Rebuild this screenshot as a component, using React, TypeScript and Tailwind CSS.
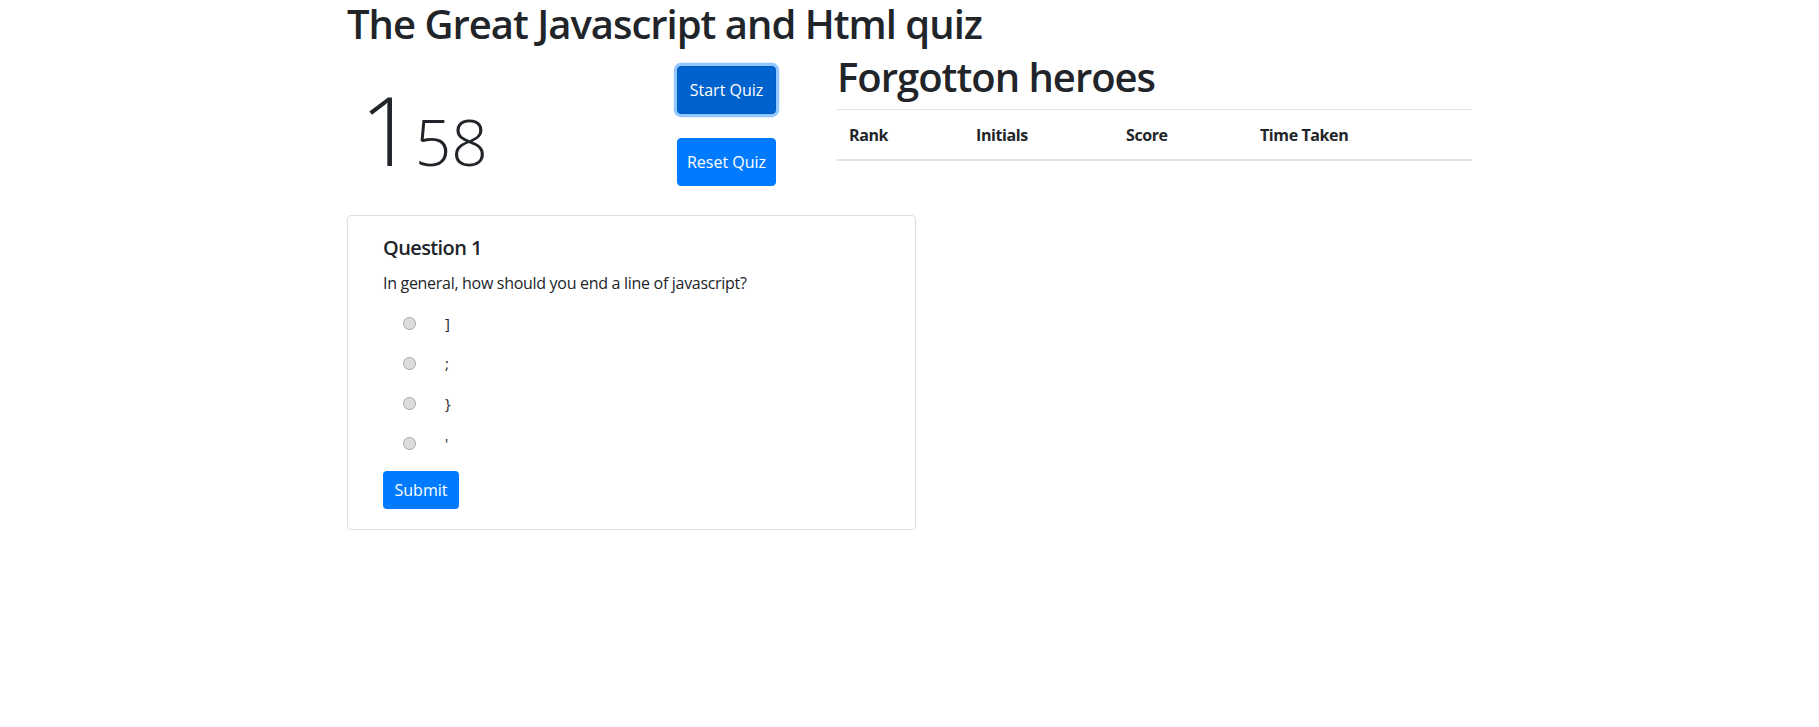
const options = ["]", ";", "}", "'"]

function Radio() {
  return (
    <span className="block h-[13px] w-[13px] rounded-full border border-[#a6a6a6] bg-[#dddddd]" />
  )
}

export default function App() {
  return (
    <div className="min-h-screen bg-white text-[#212529] [font-family:'Open_Sans','Noto_Sans',sans-serif]">
      <div className="mx-auto w-[1125px]">
        <h1 className="mb-2 text-[40px] leading-[48px] font-semibold tracking-[-1px]">
          The Great Javascript and Html quiz
        </h1>

        <div className="flex">
          <div className="flex w-[490px]">
            <div className="flex w-[330px] items-baseline pl-[13px] pt-[25px] font-light">
              <span className="text-[96px] leading-[96px]">1</span>
              <span className="text-[64px] leading-none">58</span>
            </div>
            <div className="flex flex-col gap-6 pt-[10px]">
              <button className="h-[48px] w-[99px] rounded-[4px] border border-[#005cbf] bg-[#0062cc] text-base text-white shadow-[0_0_0_3.2px_rgba(38,143,255,0.5)]">
                Start Quiz
              </button>
              <button className="h-[48px] w-[99px] rounded-[4px] border border-[#007bff] bg-[#007bff] text-base text-white">
                Reset Quiz
              </button>
            </div>
          </div>

          <div className="w-[635px]">
            <h2 className="mb-[11px] text-[40px] leading-[42px] font-semibold tracking-[-1px]">Forgotton heroes</h2>
            <table className="w-full border-collapse text-left text-base">
              <thead>
                <tr className="border-t border-b-2 border-t-[#dee2e6] border-b-[#dee2e6]">
                  <th className="w-[127px] px-3 pt-[13px] pb-3 leading-6 font-bold tracking-[-0.4px]">Rank</th>
                  <th className="w-[150px] px-3 pt-[13px] pb-3 leading-6 font-bold tracking-[-0.4px]">Initials</th>
                  <th className="w-[134px] px-3 pt-[13px] pb-3 leading-6 font-bold tracking-[-0.4px]">Score</th>
                  <th className="px-3 pt-[13px] pb-3 leading-6 font-bold tracking-[-0.4px]">Time Taken</th>
                </tr>
              </thead>
              <tbody />
            </table>
          </div>
        </div>

        <div className="mt-[29px] w-[569px] rounded-[4px] border border-[rgba(0,0,0,0.125)] px-[35px] pt-5 pb-5">
          <h5 className="text-[20px] leading-6 font-semibold tracking-[-0.6px]">Question 1</h5>
          <p className="mt-[11px] text-base leading-6 tracking-[-0.3px]">
            In general, how should you end a line of javascript?
          </p>
          <div className="mt-2">
            {options.map((o) => (
              <label key={o} className="flex h-10 items-center pl-[20px]">
                <Radio />
                <span className="ml-[29px] text-[15px] leading-6">{o}</span>
              </label>
            ))}
          </div>
          <button className="mt-2 h-[38px] w-[76px] rounded-[4px] bg-[#007bff] text-base text-white">Submit</button>
        </div>
      </div>
    </div>
  )
}
